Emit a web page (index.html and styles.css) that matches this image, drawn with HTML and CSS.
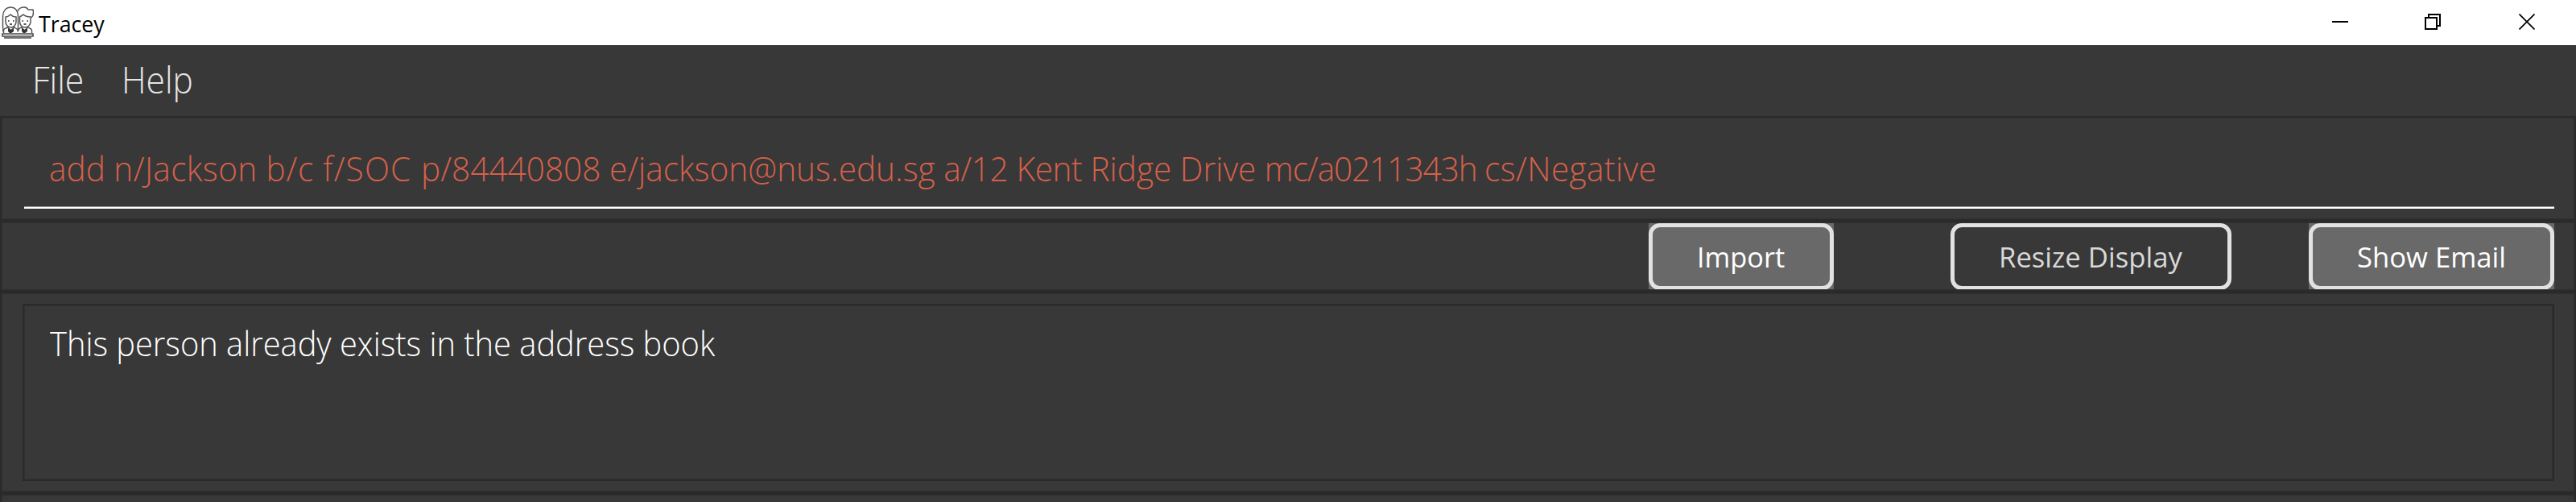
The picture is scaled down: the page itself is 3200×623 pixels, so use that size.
FILE: index.html
```html
<!DOCTYPE html>
<html lang="en">
<head>
<meta charset="utf-8">
<title>Tracey</title>
<link rel="stylesheet" href="styles.css">
</head>
<body>
<header class="titlebar">
  <svg class="app-icon" viewBox="0 0 40 40" fill="none" stroke="#555" stroke-width="1.500">
    <path d="M1.500 31c1-2 0-4 0-6V12C2 5 6 1 11.500 1S20 5 20.500 12v16c0 1 0 2-1 3"/>
    <path d="M20 6c1-3 4-5 8-5 3 0 4 1 5 3l6 0c1 4 0 8-2 10"/>
    <path d="M5 13v6c0 4 3 7 6.500 7s6.500-3 6.500-7v-6c-3 0-5-1-7-3-1 1-3 3-6 3z"/>
    <path d="M22.500 13v6c0 4 3 7 6.500 7s7-3 7-7v-6c-4 0-7-1-9-3-1 1-3 2-4.500 3z"/>
    <path d="M2.500 33v-4c1-2 3-2 5-3l4 4 4-4c2 1 4 1 5 4 1-3 2-3 4-4l4 4 4-4c3 1 5 2 5 4v3"/>
    <path d="M1 34h38v3H1zM3 39h34" stroke="#444"/>
    <path d="M8 18h1.500M14 18h1.500M25.500 18h1.500M31.500 18h1.500M10 22h3M27.500 22h3" stroke="#222"/>
    <path d="M8 27l3.500 2 3.500-2v4l-3 2H10l-2-2zM25 27l3.500 2 3.500-2v4l-3 2h-2l-2-2z" fill="#333" stroke="none"/>
  </svg>
  <span class="title">Tracey</span>
  <div class="window-controls">
    <svg class="control" viewBox="0 0 20 20"><path d="M0 10h20" stroke="#000" stroke-width="2"/></svg>
    <svg class="control restore" viewBox="0 0 20 20" fill="none" stroke="#000" stroke-width="2"><path d="M1 5h14v14H1zM5 5V1h14v14h-4"/></svg>
    <svg class="control" viewBox="0 0 20 20"><path d="M.5.5l19 19M19.500.5l-19 19" stroke="#000" stroke-width="1.700"/></svg>
  </div>
</header>
<nav class="menubar"><span class="menu-file">File</span><span class="menu-help">Help</span></nav>
<main>
  <section class="pane command-pane"><div class="command"><span class="command-text">add <span class="arg name">n/Jackson </span><span class="arg block">b/c </span><span class="arg faculty">f/SOC </span>p/84440808 e/jackson@nus.edu.sg <span class="arg address">a/12 Kent </span>Ridge Drive <span class="arg matric">mc/a0211343h </span><span class="arg status">cs/Negative</span></span></div></section>
  <section class="pane button-pane">
    <div class="button-back import"><button class="button"><span class="import-label">Import</span></button></div>
    <div class="button-back resize"><button class="button"><span class="resize-label">Resize Display</span></button></div>
    <div class="button-back email"><button class="button"><span class="email-label">Show Email</span></button></div>
  </section>
  <section class="pane result-pane"><div class="result"><span class="result-text">This person already exists in the address book</span></div></section>
  <section class="pane list-pane"></section>
</main>
</body>
</html>
```
FILE: styles.css
```css
* { box-sizing: border-box; }
html { height: 623px; overflow: hidden; }
body { margin: 0; height: 623px; overflow: hidden; background: #383838; font-family: "Open Sans", "Noto Sans", sans-serif; }
main { height: 479px; overflow: hidden; }
span { display: inline-block; white-space: nowrap; transform-origin: 0 50%; }
.titlebar { height: 56px; background: #fff; color: #000; display: flex; align-items: center; padding: 0 51px 0 2px; }
.app-icon { width: 40px; height: 40px; }
.title { font-size: 28px; margin-left: 6px; padding-top: 1px; transform: scaleX(0.955); }
.window-controls { margin-left: auto; padding-bottom: 2px; display: flex; gap: 96px; }
.control { width: 20px; height: 20px; }
.restore { margin: 0 1px 0 -1px; }
.menubar { height: 88px; display: flex; padding: 10px 0 0 40px; font-size: 46px; line-height: 64px; font-weight: 300; color: #e6e6e6; }
.menu-file { transform: scaleX(0.93); }
.menu-help { margin-left: 42px; transform: scaleX(0.925); }
.pane { border: 2px solid #2a2a2a; outline: 1px solid #303030; outline-offset: -3px; }
.command-pane { height: 130px; padding: 0 25px 0 28px; }
.command { height: 113px; border-bottom: 2px solid #fff; box-shadow: inset 0 -1px #999; padding: 33px 0 0 31px; color: #d6604a; font-size: 42px; line-height: 60px; font-weight: 300; }
.command-text { transform: scaleX(0.966); }
.arg { display: inline; }
.name { letter-spacing: 0.4px; }
.block { letter-spacing: 0.75px; }
.faculty { letter-spacing: 1.2px; }
.address { letter-spacing: -0.4px; }
.matric { letter-spacing: -1.1px; }
.status { letter-spacing: 0.4px; }
.button-pane { height: 88px; padding: 1px 25px 0 0; display: flex; justify-content: flex-end; }
.button-back { height: 83px; background: #696969; }
.import { width: 230px; margin-right: 145px; }
.resize { width: 349px; margin-right: 96px; background: none; }
.email { width: 305px; }
.button { display: block; width: 100%; height: 83px; border: 5px solid #e2e2e2; border-radius: 14px; background: none; color: #fff; font: 400 35px "Open Sans", sans-serif; padding: 0 0 0 55px; text-align: left; }
.resize .button { color: #d8d8d8; }
.import-label { transform: scaleX(0.98); }
.resize-label, .email-label { transform: scaleX(0.99); }
.result-pane { height: 250px; padding: 13px 25px 0 26px; }
.result { height: 220px; border: 2px solid #2a2a2a; outline: 1px solid #303030; outline-offset: -3px; padding: 17px 0 0 32px; color: #fff; font-size: 42px; line-height: 60px; font-weight: 300; }
.result-text { transform: scaleX(0.948); }
.list-pane { height: 40px; }
```
